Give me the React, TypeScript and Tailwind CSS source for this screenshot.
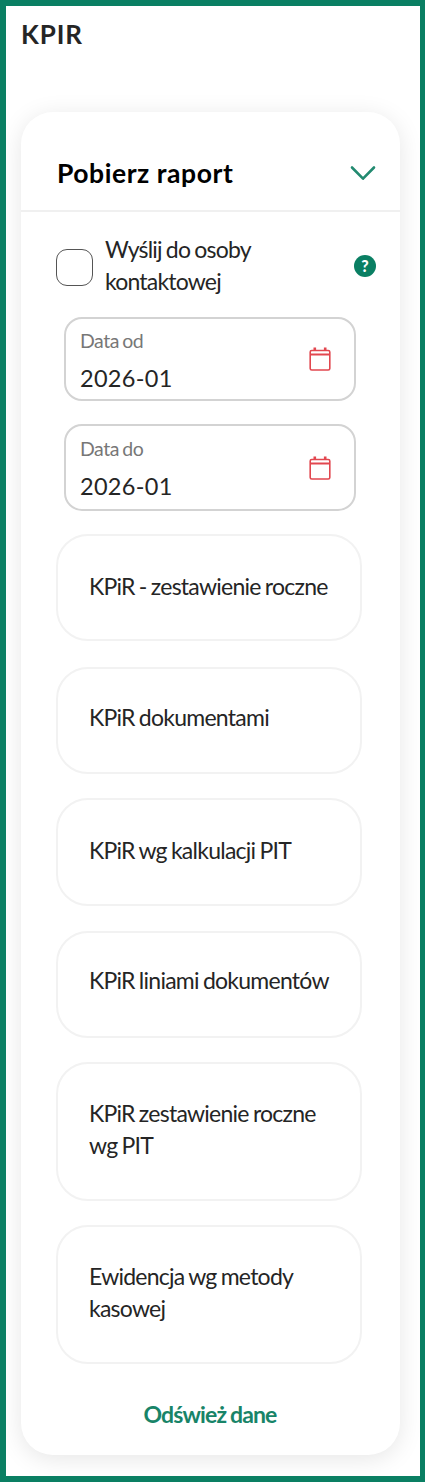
import React from 'react';

interface DateFieldProps {
  label: string;
  value: string;
  className?: string;
}

interface Report {
  title: string;
  className: string;
}

const reports: Report[] = [
  { title: 'KPiR - zestawienie roczne', className: 'h-[107px] pb-[4px]' },
  { title: 'KPiR dokumentami', className: 'mt-[26px] h-[107px] pb-[7px]' },
  { title: 'KPiR wg kalkulacji PIT', className: 'mt-[24px] h-[108px] pb-[5px]' },
  { title: 'KPiR liniami dokumentów', className: 'mt-[25px] h-[107px] pb-[9px]' },
  { title: 'KPiR zestawienie roczne wg PIT', className: 'mt-[24px] h-[139px] pb-[5px]' },
  { title: 'Ewidencja wg metody kasowej', className: 'mt-[24px] h-[139px] pb-[5px]' },
];

const CalendarIcon: React.FC = () => (
  <svg width="24" height="28" viewBox="0 0 24 28" fill="none" stroke="#e2474f">
    <rect x="2.2" y="5.5" width="19.6" height="19.5" rx="1.6" strokeWidth="1.6" />
    <path d="M2.2 9.5H21.8" strokeWidth="2" />
    <path d="M6.8 2.5V5.5M17.2 2.5V5.5" strokeWidth="2.6" />
  </svg>
);

const DateField: React.FC<DateFieldProps> = ({ label, value, className }) => (
  <div
    className={`ml-2 flex w-[292px] items-center justify-between rounded-[18px] border-2 border-[#d3d3d3] pl-[14px] pr-[22px] ${className}`}
  >
    <div className="pt-0.5">
      <div className="text-[19.5px] leading-6 tracking-[-0.5px] text-[#777] [word-spacing:-1px]">{label}</div>
      <div className="mt-[11px] text-[23.5px] leading-7 tracking-[0.3px] text-[#252525]">{value}</div>
    </div>
    <CalendarIcon />
  </div>
);

export default function App() {
  return (
    <div className="h-[1484px] w-[431px] bg-white font-['Lato',sans-serif] text-[#252525]">
      <div className="h-[1482px] w-[425px] overflow-hidden border-6 border-r-5 border-[#0a7f63] pl-[15px]">
        <h1 className="pt-3 text-[26px] font-bold leading-8 tracking-[0.9px]">KPIR</h1>

        <section className="mt-[62px] h-[1343px] w-[379px] rounded-[32px] bg-white shadow-[0_4px_24px_rgba(0,0,0,0.1)]">
          <header className="flex h-[100px] items-center justify-between border-b-2 border-[#f0f0f0] pl-9 pr-6 pt-6">
            <h2 className="text-[26.5px] font-bold leading-8 tracking-[0.55px] text-black">Pobierz raport</h2>
            <svg width="26" height="16" viewBox="0 0 26 16" fill="none" stroke="#228a70" strokeWidth="2.6">
              <path d="M2 2.5L13 13.7L24 2.5" strokeLinecap="round" strokeLinejoin="round" />
            </svg>
          </header>

          <div className="pl-[35px] pt-[21px]">
            <div className="flex h-16 items-center pr-6">
              <span className="mt-1 size-[37px] shrink-0 rounded-[11px] border-[1.5px] border-[#555]" />
              <span className="ml-3 w-[180px] pb-px text-[23px] leading-8 tracking-[-0.8px] [word-spacing:-1px]">
                Wyślij do osoby kontaktowej
              </span>
              <span className="ml-auto mt-px flex size-[22px] items-center justify-center rounded-full bg-[#0a7f63] text-[16px] font-black leading-none text-white">
                ?
              </span>
            </div>

            <DateField label="Data od" value="2026-01" className="mt-5 h-[84px]" />
            <DateField label="Data do" value="2026-01" className="mb-[23px] mt-[23px] h-[87px]" />

            {reports.map((report) => (
              <button
                key={report.title}
                className={`flex w-[306px] items-center rounded-[32px] border-2 border-[#f2f2f2] pl-[31px] pr-6 text-left text-[23px] leading-8 tracking-[-0.75px] [word-spacing:-1px] ${report.className}`}
              >
                {report.title}
              </button>
            ))}

            <button className="mt-[34px] block w-[308px] text-center text-[23px] font-bold leading-8 tracking-[-0.85px] text-[#188468] [word-spacing:-1px]">
              Odśwież dane
            </button>
          </div>
        </section>
      </div>
    </div>
  );
}
